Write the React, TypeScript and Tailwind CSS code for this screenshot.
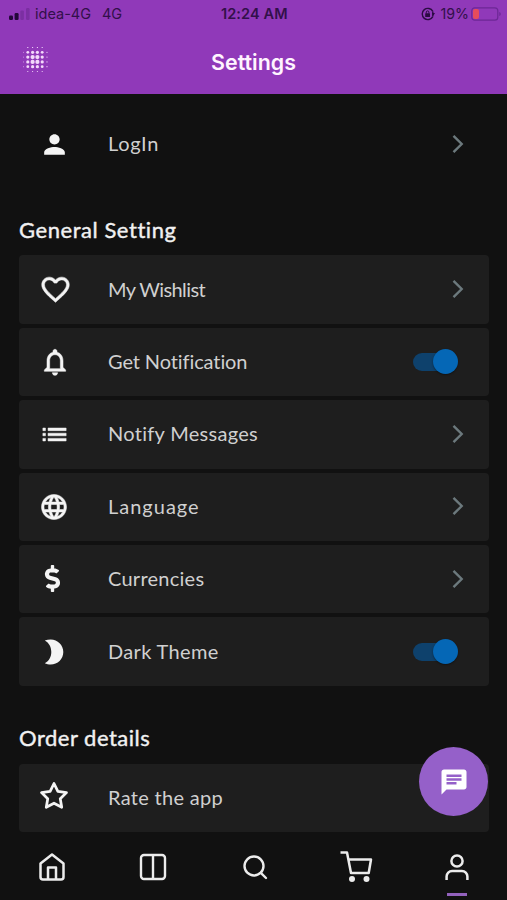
import React from 'react';
import { MdPerson, MdFavoriteBorder, MdNotificationsNone, MdList, MdLanguage, MdChat } from 'react-icons/md';
import { FaDollarSign } from 'react-icons/fa';
import { FiStar } from 'react-icons/fi';

const font = "font-['Lato',sans-serif]";

const Chevron = () => (
  <svg width="14" height="22" viewBox="0 0 14 22" fill="none" stroke="#6c797d" strokeWidth="2.4">
    <path d="M2.5 2.8 10.7 11 2.5 19.2" />
  </svg>
);

const Toggle = () => (
  <div className="relative w-[45px] h-[25px] flex items-center">
    <div className="w-[40px] h-[18px] rounded-full bg-[#0e416c]" />
    <div className="absolute right-0 top-0 w-[25px] h-[25px] rounded-full bg-[#0567b6] shadow-[0_1px_2px_rgba(0,0,0,0.4)]" />
  </div>
);

const Moon = () => (
  <svg width="20" height="26" viewBox="0 0 20 26" fill="currentColor">
    <path d="M.8 1.6C2.6.8 4.6.4 6.7.4 13.7.4 19.3 6 19.3 13S13.7 25.6 6.7 25.6c-2.1 0-4.1-.4-5.9-1.3C5.1 22 7.3 17.8 7.3 13S5.1 4 .8 1.6z" />
  </svg>
);

type RowProps = {
  icon: React.ReactNode;
  label: string;
  tracking?: string;
  right?: React.ReactNode;
  className?: string;
};

function Row({ icon, label, tracking = '', right, className = 'bg-[#1e1e1e]' }: RowProps) {
  return (
    <div className={`h-[68.4px] shrink-0 flex items-center rounded-[4px] ${className}`}>
      <div className="w-[70px] flex justify-center text-[#f4f4f4]">{icon}</div>
      <div className={`ml-[19px] pb-[2px] flex-1 text-[20px] leading-none whitespace-nowrap text-[#d0d0d0] ${tracking}`}>{label}</div>
      {right}
    </div>
  );
}

export default function App() {
  const chevron = <div className="mr-[24px] mb-px"><Chevron /></div>;
  const toggle = <div className="mr-[31px]"><Toggle /></div>;
  const bolder = '[&>path:last-child]:stroke-[0.4px]';

  return (
    <div className={`w-[507px] h-[900px] bg-[#111111] overflow-hidden flex flex-col ${font}`}>
      {/* Status bar + header */}
      <div className="h-[94px] shrink-0 bg-[#9039b9] font-['Inter',sans-serif]">
        <div className="h-[28px] pl-[8px] pr-[6px] flex items-center justify-between relative text-[14.5px] leading-none text-[#32104a]">
          <div className="flex items-center">
            <svg width="22" height="14" viewBox="0 0 22 14">
              <rect x="1" y="8.5" width="4" height="4.5" rx="1.2" fill="#24083b" />
              <rect x="6.6" y="6" width="4" height="7" rx="1.2" fill="#24083b" />
              <rect x="12.3" y="3.5" width="3.6" height="9.5" rx="1.2" fill="#7b2fa2" />
              <rect x="18" y="1" width="3.6" height="12" rx="1.2" fill="#7b2fa2" />
            </svg>
            <span className="ml-[5px]">idea-4G</span>
            <span className="ml-[11px]">4G</span>
          </div>
          <span className="absolute left-[221px] font-semibold tracking-[0.1px]">12:24 AM</span>
          <div className="flex items-center">
            <svg width="14" height="14" viewBox="0 0 14 14" fill="none" stroke="#2a0b42" strokeWidth="1.4">
              <path d="M11.8 4.4A5.6 5.6 0 1 0 11.8 9.6" />
              <path d="M11.8 4.4v5.2" />
              <path d="M11 6h3l-1.5 2.5z" fill="#2a0b42" stroke="none" />
              <rect x="4.2" y="6.3" width="4.8" height="3.7" rx=".5" fill="#2a0b42" stroke="none" />
              <path d="M5.3 6.5V5.2a1.3 1.3 0 0 1 2.6 0v1.3" strokeWidth="1" />
            </svg>
            <span className="ml-[6px] mr-[2px] text-[14.2px]">19%</span>
            <svg width="30" height="14" viewBox="0 0 30 14">
              <rect x=".8" y=".8" width="26" height="12.4" rx="3" fill="none" stroke="#6c2795" strokeWidth="1.2" />
              <rect x="2" y="2" width="6" height="10" rx="2" fill="#e64c5c" />
              <path d="M28.3 5v4c1-.3 1.4-1.1 1.4-2s-.4-1.7-1.4-2z" fill="#6c2795" />
            </svg>
          </div>
        </div>
        <div className="h-[66px] relative flex items-center justify-center">
          <svg className="absolute left-[23px] top-[19px]" width="25" height="25" viewBox="0 0 25 25" fill="#f3d9fb">
            {[-2.5, -1.5, -0.5, 0.5, 1.5, 2.5].map((y) =>
              [-2.5, -1.5, -0.5, 0.5, 1.5, 2.5].map((x) => {
                const d = Math.hypot(x, y);
                const r = d > 3 ? 0 : d < 1 ? 2.1 : d < 1.7 ? 1.6 : d < 2.3 ? 1.4 : 0.6;
                return <circle key={`${x}${y}`} cx={12 + x * 4.8} cy={12.5 + y * 4.8} r={r} />;
              })
            )}
          </svg>
          <h1 className="text-[21.4px] leading-none font-semibold text-[#fff4ff] pt-[3px]">Settings</h1>
        </div>
      </div>

      {/* Content */}
      <div className="h-[739px] shrink-0 overflow-hidden flex flex-col pl-[19px] pr-[18px] pt-[16px]">
        <Row icon={<MdPerson size={31} />} label="LogIn" tracking="tracking-[0.7px]" right={chevron} className="" />

        <h2 className="mt-[39.6px] h-[24px] text-[22px] leading-[24px] tracking-[0.55px] [-webkit-text-stroke:0.4px] text-[#f1f1f1]">General Setting</h2>
        <div className="mt-[13.4px] flex flex-col gap-[4px]">
          <Row icon={<MdFavoriteBorder size={33} className={`ml-[2px] ${bolder}`} />} label="My Wishlist" tracking="tracking-[-0.6px]" right={chevron} />
          <Row icon={<MdNotificationsNone size={32} className={`ml-[2px] ${bolder}`} />} label="Get Notification" tracking="tracking-[-0.1px]" right={toggle} />
          <Row icon={<MdList size={31} className={bolder} />} label="Notify Messages" tracking="tracking-[0.3px]" right={chevron} />
          <Row icon={<MdLanguage size={30} className={bolder} />} label="Language" tracking="tracking-[1px]" right={chevron} />
          <Row icon={<FaDollarSign size={27} className="mr-[3px] mb-[2px]" />} label="Currencies" tracking="tracking-[0.25px]" right={chevron} />
          <Row icon={<Moon />} label="Dark Theme" tracking="tracking-[0.35px]" right={toggle} />
        </div>

        <h2 className="mt-[40px] h-[24px] text-[22px] leading-[24px] tracking-[0.5px] [-webkit-text-stroke:0.4px] text-[#f1f1f1]">Order details</h2>
        <div className="mt-[14px]">
          <Row icon={<FiStar size={30} strokeWidth={2.2} className="mb-[3px]" />} label="Rate the app" tracking="tracking-[0.3px]" />
        </div>
      </div>

      {/* Chat button */}
      <div className="absolute left-[419px] top-[747px] w-[69px] h-[69px] rounded-full bg-[#9560c9] flex items-center justify-center">
        <MdChat size={30} color="#fff" />
      </div>

      {/* Tab bar */}
      <div className="flex-1 grid grid-cols-5 pl-px text-[#ececec]">
        <div className="flex justify-center pt-[19px]">
          <svg width="28" height="30" viewBox="0 0 28 30" fill="none" stroke="currentColor" strokeWidth="2.5" strokeLinejoin="round">
            <path d="M2.5 11.5 14 2.5l11.5 9V25a2.5 2.5 0 0 1-2.5 2.5H5A2.5 2.5 0 0 1 2.5 25z" />
            <path d="M10 27.5V15.500h8v12" />
          </svg>
        </div>
        <div className="flex justify-center pt-[20px]">
          <svg width="28" height="28" viewBox="0 0 28 28" fill="none" stroke="currentColor" strokeWidth="2.4">
            <rect x="2" y="2" width="24" height="24" rx="3" />
            <path d="M14 2v24" />
          </svg>
        </div>
        <div className="flex justify-center pt-[20px] pl-[2px]">
          <svg width="28" height="28" viewBox="0 0 28 28" fill="none" stroke="currentColor" strokeWidth="2.4" strokeLinecap="round">
            <circle cx="13" cy="13" r="9.5" />
            <path d="m19.8 19.8 5.2 5.2" />
          </svg>
        </div>
        <div className="flex justify-center pt-[17px] pl-px">
          <svg width="34" height="34" viewBox="0 0 34 34" fill="none" stroke="currentColor" strokeWidth="2.5" strokeLinejoin="round">
            <path d="M1.5 2.5h6.500L12 23h17.700l2.300-13.500H9.400" />
            <circle cx="13" cy="29" r="3" fill="currentColor" stroke="none" />
            <circle cx="27.5" cy="29" r="3" fill="currentColor" stroke="none" />
          </svg>
        </div>
        <div className="flex flex-col items-center pt-[20px] pl-[2px]">
          <svg width="26" height="28" viewBox="0 0 26 28" fill="none" stroke="currentColor" strokeWidth="2.5">
            <circle cx="13" cy="8" r="5.6" />
            <path d="M2.6 27v-3.500a5.500 5.500 0 0 1 5.500-5.500h9.800a5.500 5.500 0 0 1 5.500 5.500V27" />
          </svg>
          <div className="mt-[12px] w-[20px] h-[3px] bg-[#9362bd]" />
        </div>
      </div>
    </div>
  );
}
